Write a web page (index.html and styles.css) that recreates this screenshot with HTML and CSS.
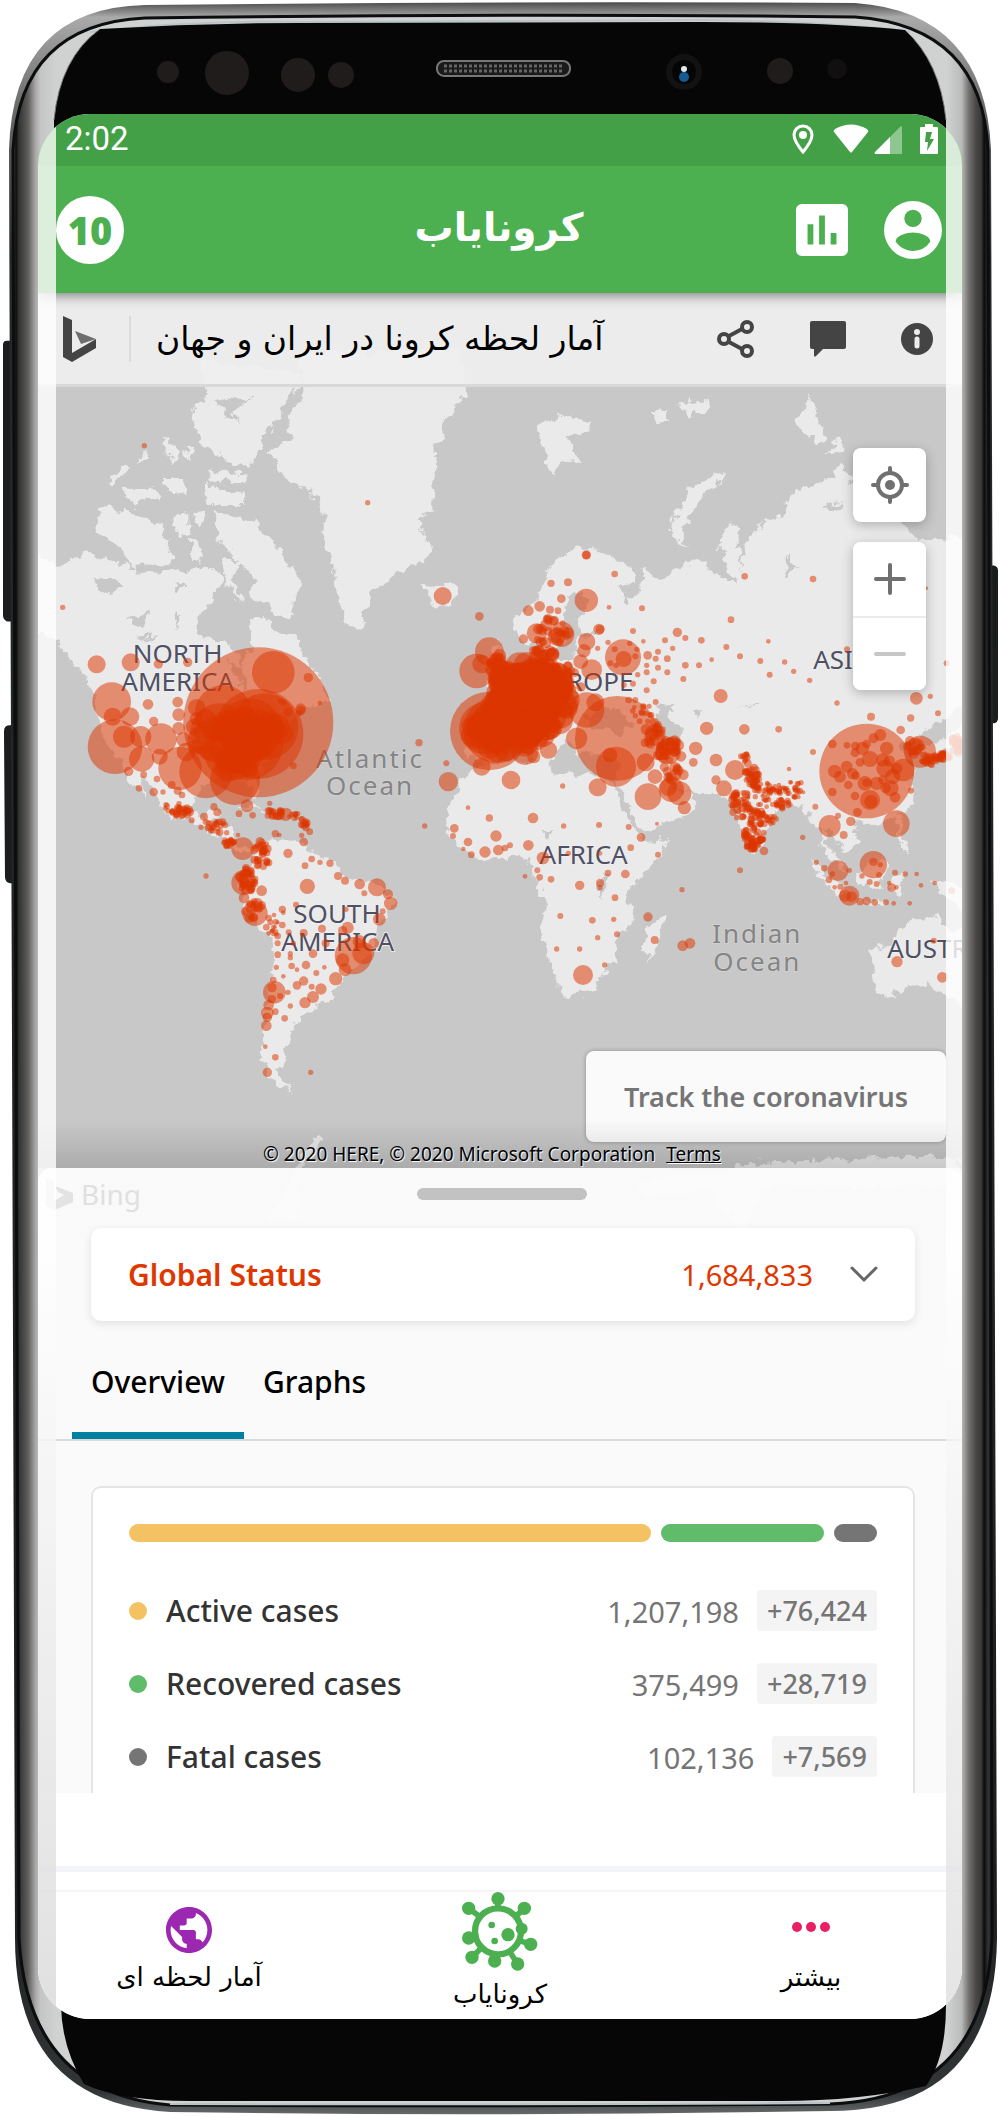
FILE: index.html
```html
<!DOCTYPE html>
<html lang="fa">
<head>
<meta charset="utf-8">
<meta name="viewport" content="width=device-width, initial-scale=1">
<title>کرونایاب</title>
<link rel="stylesheet" href="styles.css">
</head>
<body>
<div class="phone">
  <svg class="bezel" viewBox="0 0 1000 2117" preserveAspectRatio="none" aria-hidden="true">
    <defs>
      <linearGradient id="metal" x1="9" x2="996" y1="0" y2="0" gradientUnits="userSpaceOnUse">
        <stop offset="0" stop-color="#1c2022"/><stop offset=".004" stop-color="#6b6b69"/><stop offset=".007" stop-color="#0b0b0b"/>
        <stop offset=".01" stop-color="#333"/><stop offset=".019" stop-color="#5c5b5a"/><stop offset=".027" stop-color="#aaa9a8"/><stop offset=".032" stop-color="#c4c5c5"/><stop offset=".048" stop-color="#d0d2d2"/>
        <stop offset=".95" stop-color="#d0d2d2"/><stop offset=".965" stop-color="#b9bcbb"/><stop offset=".972" stop-color="#777573"/><stop offset=".979" stop-color="#4b4a48"/>
        <stop offset=".985" stop-color="#3a3937"/><stop offset=".988" stop-color="#0a0a0a"/><stop offset=".992" stop-color="#303436"/><stop offset="1" stop-color="#15191b"/>
      </linearGradient>
      <linearGradient id="rim" x1="0" x2="0" y1="0" y2="1">
        <stop offset="0" stop-color="#4c4c4c"/><stop offset=".007" stop-color="#aaa"/><stop offset=".05" stop-color="#6a6a69"/><stop offset=".12" stop-color="#26292a"/>
        <stop offset=".9" stop-color="#1d1f20"/><stop offset=".99" stop-color="#333637"/><stop offset="1" stop-color="#66696a"/>
      </linearGradient>
    </defs>
    <path d="M3 345q0-4 4-4h8v281h-8q-4-2-4-6zM4 732q0-6 6-6h8v158h-8q-5-1-5-6zM985 566h9q4 1 4 5v148q0 5-5 5h-8z" fill="#1a1c1d"/>
    <path d="M9 150Q13 8 145 5Q500 1 855 3Q985 12 991 150L997 1940Q995 2113 830 2113Q500 2119 170 2114Q15 2105 15 1940Z" fill="url(#rim)"/>
    <path d="M13 150Q20 24 145 18Q500 13 855 17Q982 26 988 150L992 1940Q985 2100 830 2106Q500 2109 170 2107Q28 2095 19 1940Z" fill="url(#metal)" stroke="#0c0d0e" stroke-width="3"/>
    <path d="M90 32Q190 20 300 22L700 20Q840 22 910 32M170 2106Q500 2107 830 2105" fill="none" stroke="#b9c4c6" stroke-width="2"/>
    <path d="M54 120Q60 58 100 29Q200 23 300 23L700 22Q830 22 905 30Q940 62 946 120V2008Q946 2060 926 2088Q860 2103 780 2103H190Q120 2103 84 2086Q62 2050 61 2008Z" fill="#060606"/>
    <path d="M54 120Q60 58 100 29M905 30Q940 62 946 120" fill="none" stroke="#77797a"/>
    <g fill="#201c1c">
      <circle cx="168" cy="72" r="11"/><circle cx="227" cy="73" r="22"/><circle cx="298" cy="75" r="17"/><circle cx="341" cy="75" r="13"/><circle cx="780" cy="71" r="13"/><circle cx="837" cy="69" r="10" fill="#120f10"/>
    </g>
    <circle cx="684" cy="72" r="18" fill="#121212"/><circle cx="684" cy="72" r="12" fill="#050505"/><circle cx="684" cy="77" r="5" fill="#165a92"/><circle cx="684" cy="69" r="3" fill="#dde8f0"/>
    <rect x="437" y="61" width="133" height="15" rx="7" fill="#1a1a1a" stroke="#777" stroke-width="2"/>
    <path d="M444 66H564M444 71H564" stroke="#666" stroke-width="3" stroke-dasharray="3 2"/>
  </svg>

  <main class="screen">
    <div class="status">
      <span>2:02</span>
      <span class="status-icons">
        <svg width="22" height="30" viewBox="0 0 22 30"><path d="M11 2a9 9 0 0 0-9 9c0 6 9 17 9 17s9-11 9-17a9 9 0 0 0-9-9z" fill="none" stroke="#fff" stroke-width="3"/><circle cx="11" cy="11" r="4" fill="#fff"/></svg>
        <svg class="wifi" width="36" height="30" viewBox="0 0 36 30"><path d="M1 8Q0 7 2 5Q18-4 34 5Q36 7 35 8L19 28Q18 29 17 28Z" fill="#fff"/></svg>
        <svg class="signal" width="28" height="30" viewBox="0 0 28 30"><path d="M16 13L27 2q1 0 1 2v26H16z" fill="#fff" opacity=".4"/><path d="M16 13V30H1Q0 29 1 28z" fill="#fff"/></svg>
        <svg width="18" height="32" viewBox="0 0 18 32"><path fill-rule="evenodd" d="M5 1h8v3h4q1 0 1 1v25q0 1-1 1H1q-1 0-1-1V5q0-1 1-1h4zM12 9H6L5 19h3L7 28l7-12h-4z" fill="#fff"/></svg>
      </span>
    </div>

    <header class="appbar">
      <span class="badge">10</span>
      <h1 dir="rtl">کرونایاب</h1>
      <span class="appbar-actions">
        <button aria-label="Statistics"><svg width="52" height="52" viewBox="3 3 18 18"><path fill="#fff" d="M19 3H5a2 2 0 0 0-2 2v14a2 2 0 0 0 2 2h14a2 2 0 0 0 2-2V5a2 2 0 0 0-2-2zM9 17H7v-7h2zm4 0h-2V7h2zm4 0h-2v-4h2z"/></svg></button>
        <button aria-label="Account"><svg width="58" height="58" viewBox="2 2 20 20"><path fill="#fff" fill-rule="evenodd" d="M12 2a10 10 0 1 0 0 20 10 10 0 0 0 0-20zm0 3a3 3 0 1 1 0 6 3 3 0 0 1 0-6zm0 14.2c-2.500 0-4.710-1.280-6-3.220.03-1.990 4-3.080 6-3.080s5.970 1.090 6 3.080a7.200 7.200 0 0 1-6 3.220z"/></svg></button>
      </span>
    </header>

    <div class="toolbar">
      <svg width="33" height="46" viewBox="0 0 33 46" aria-label="Bing"><path d="M0 0l9 4v33l24-14v9L9 46 0 41z" fill="#444"/><path d="M12 15l21 8-15 5z" fill="#6e6e6e"/></svg>
      <h2 dir="rtl">آمار لحظه کرونا در ایران و جهان</h2>
      <button aria-label="Share"><svg width="38" height="38" viewBox="0 0 38 38" fill="none" stroke="#444" stroke-width="4"><path d="M12 16L25 9M12 22l13 7"/><circle cx="7" cy="19" r="5"/><circle cx="30" cy="7" r="5"/><circle cx="30" cy="31" r="5"/></svg></button>
      <button aria-label="Feedback"><svg width="38" height="38" viewBox="0 0 38 38"><path d="M3 1h32q2 0 2 2v24q0 2-2 2H14l-7 7q-1 1-2 0v-7H3q-2 0-2-2V3q0-2 2-2z" fill="#444"/></svg></button>
      <button aria-label="Information"><svg width="32" height="32" viewBox="0 0 32 32"><circle cx="16" cy="16" r="16" fill="#444"/><circle cx="16" cy="9" r="3" fill="#ececec"/><path d="M16 16v7" stroke="#ececec" stroke-width="5" stroke-linecap="round"/></svg></button>
    </div>

    <section class="map">
      <svg class="map-canvas" viewBox="114 21 2772 2343" role="img" aria-label="World map">
        <defs>
          <filter id="coast" x="0" y="-300" width="3000" height="3000" filterUnits="userSpaceOnUse">
            <feTurbulence type="fractalNoise" baseFrequency="0.032" numOctaves="4" seed="4"/>
            <feDisplacementMap in="SourceGraphic" scale="44" xChannelSelector="R" yChannelSelector="G"/>
          </filter>
        </defs>
        <rect x="114" y="-270" width="2772" height="2850" fill="#c8c8c8"/>
        <g filter="url(#coast)">
        <g fill="#eaeaea">
          <path d="M60 500L170 555 260 520 350 545 420 575 500 580 560 570 620 560 665 590 650 640 620 680 590 720 590 770 640 782 700 800 730 870 755 800 750 720 800 710 830 760 885 770 910 830 960 900 990 960 900 985 850 1060 800 1120 780 1180 765 1260 740 1200 680 1190 620 1200 580 1260 570 1290 605 1312 640 1280 660 1290 650 1330 695 1340 700 1390 730 1412 775 1395 780 1410 730 1425 680 1395 640 1355 580 1328 500 1305 470 1245 420 1180 440 1260 380 1180 330 1110 290 1020 290 960 260 900 210 840 170 780 60 740z"/>
          <path d="M780 1385L820 1378 900 1390 960 1430 1000 1445 1040 1490 1130 1515 1185 1560 1150 1620 1125 1680 1110 1730 1040 1780 1000 1840 950 1885 900 1910 875 1945 855 2000 865 2020 830 2080 875 2132 820 2115 785 2040 790 1960 800 1850 822 1740 820 1670 770 1640 730 1570 720 1500 760 1440z"/>
          <path d="M900-80L1380-90 1398 40 1330 120 1312 200 1300 280 1318 380 1250 420 1290 500 1275 550 1190 580 1110 640 1080 745 1040 735 1015 660 1000 560 972 470 970 400 930 330 860 300 800 220 875 170 860 110 915 50z"/>
          <path d="M600-60L900-20 890 50 850 100 790 180 745 260 680 240 600 180 575 100 620 40z"/>
          <path d="M640 400L700 405 770 430 850 520 905 610 880 650 875 715 800 680 750 650 770 600 710 540 650 470zM300 380L370 390 430 420 480 440 525 545 400 565 350 490 290 460zM610 305L660 330 735 335 725 375 620 375zM630 275L745 280 735 308 620 300zM530 400L565 400 565 475 515 450zM580 400L620 395 600 450zM570 470L610 500 600 545 570 535zM320 312L370 258 385 270 330 322zM360 320L470 320 480 350 400 378zM490 300L550 300 555 345 500 335zM480 165L540 210 530 245 500 222zM410 250L440 205 440 240zM680 540L720 545 700 600 730 670 670 600zM790 620L850 640 890 710 820 680zM550 200L580 220 570 240z"/>
          <path d="M1265 615L1375 620 1360 675 1310 685z"/>
          <path d="M1605 140L1700 105 1775 130 1745 165 1700 170 1745 250 1680 235 1665 298 1638 240zM1950 95L2000 90 2010 120 1970 130zM2040 70L2130 60 2140 80 2070 110zM2150 280L2178 290 2110 350 2070 400 2050 460 2065 500 2005 470 2030 400 2070 330zM2390 130L2430 55 2460 120 2480 190 2430 180zM2475 225L2510 165 2530 215z"/>
          <path d="M1548 720L1620 640 1640 570 1700 520 1770 495 1830 530 1900 570 1910 610 1850 620 1880 665 1930 620 1935 560 1970 600 2090 540 2180 600 2210 615 2155 500 2190 425 2215 450 2220 570 2240 480 2300 420 2350 405 2360 350 2440 320 2500 290 2520 250 2555 300 2600 400 2700 420 2760 490 2840 470 2900 470 2900 980 2800 1030 2770 1055 2750 1110 2720 1080 2690 1100 2730 1140 2740 1200 2735 1280 2680 1310 2600 1335 2560 1320 2572 1380 2535 1412 2500 1370 2470 1340 2480 1400 2530 1450 2530 1475 2475 1420 2462 1340 2430 1320 2400 1270 2340 1280 2300 1340 2280 1400 2250 1412 2220 1330 2200 1280 2180 1245 2070 1232 2020 1215 1990 1180 2000 1215 2075 1240 2085 1275 2050 1305 1940 1358 1920 1350 1880 1270 1850 1200 1850 1140 1740 1115 1700 1080 1640 1160 1560 1100 1460 1150 1400 1130 1400 1020 1480 1020 1470 960 1540 910 1600 850 1620 790 1560 780z"/>
          <path d="M1450 865L1490 780 1535 900 1470 915z"/>
          <path d="M1420 1165L1480 1150 1600 1140 1650 1155 1660 1190 1700 1178 1800 1188 1840 1200 1855 1260 1900 1340 1935 1382 2002 1378 1990 1420 1900 1510 1880 1560 1902 1620 1850 1680 1845 1740 1780 1830 1690 1848 1660 1770 1620 1650 1640 1570 1600 1490 1590 1430 1540 1428 1430 1442 1360 1390 1340 1330 1345 1260z"/>
          <path d="M1992 1612L1975 1700 1945 1748 1928 1700 1940 1640zM2430 1435L2545 1540 2520 1555 2440 1462zM2530 1558L2650 1565 2640 1580zM2570 1480L2640 1430 2665 1460 2640 1522 2580 1512zM2670 1490L2720 1480 2700 1510 2710 1540 2680 1540zM2685 1305L2710 1310 2700 1360 2735 1425 2700 1400zM2790 1500L2900 1520 2900 1600 2830 1540zM2612 1720L2660 1690 2700 1650 2740 1620 2820 1600 2830 1640 2900 1660 2900 1890 2830 1840 2790 1810 2720 1830 2630 1850 2625 1800zM700 1285L760 1275 790 1290 740 1290zM790 1300L860 1295 850 1310zM2760 1100L2830 1080 2900 1020 2900 1080 2800 1130z"/>
          <path d="M880 2360L950 2270 970 2280 900 2380 900 2520 800 2520 860 2440zM2150 2380L2240 2350 2500 2340 2720 2330 2860 2330 2900 2370 2900 2420 2300 2420zM1900 2420L2000 2380 2300 2390 2230 2560 2120 2430 1950 2450z"/>
        </g>
        <g fill="#c8c8c8">
          <path d="M1690 720L1705 650 1740 630 1775 670 1730 720 1745 760 1820 745 1740 780 1710 840 1655 840 1690 790zM1970 980L2020 975 2005 1010 2045 1060 2030 1120 1990 1100zM2080 980L2105 990 2090 1015zM1750 1010L1840 985 1905 1030 1860 1060 1780 1050zM2360 520L2400 560 2350 590zM2470 380L2530 370 2500 400zM2560 410L2600 380 2600 420zM1630 1350L1660 1350 1640 1370zM1800 1490L1830 1490 1800 1560zM2220 990L2280 970 2270 980z"/>
          <path d="M280 590L370 610 340 650 300 630zM380 720L450 690 420 740zM520 600L560 620 530 640zM410 770L480 765 430 785zM520 690L550 700 530 750zM640 640L700 630 720 680 670 670zM680 840L730 870 740 930 700 880z"/>
          <path d="M640 60L760 50 700 90 720 130 670 100zM880 20L890 60 800 170 790 200zM1300 300L1330 320 1320 430 1240 430 1300 400z"/>
        </g>
        </g>
        <g class="land-label" text-anchor="middle">
          <text x="533" y="848">NORTH</text><text x="533" y="933">AMERICA</text>
          <text x="1011" y="1628">SOUTH</text><text x="1013" y="1713">AMERICA</text>
          <text x="1751" y="1453">AFRICA</text><text x="1750" y="933">EUROPE</text>
          <text x="2524" y="866">ASIA</text><text x="2866" y="1733">AUSTRALIA</text>
        </g>
        <g class="sea-label" text-anchor="middle">
          <text x="1110" y="1163">Atlantic</text><text x="1110" y="1245">Ocean</text>
          <text x="2272" y="1690">Indian</text><text x="2272" y="1773">Ocean</text>
        </g>
        <g id="cases" fill="#dd3500" fill-opacity=".52"></g>
      </svg>
      <div class="map-controls">
        <button class="map-button" aria-label="Locate me"><svg width="38" height="38" viewBox="0 0 38 38" fill="none" stroke="#707070" stroke-width="4" stroke-linecap="round"><circle cx="19" cy="19" r="12"/><path d="M19 2v5M19 31v5M2 19h5M31 19h5"/><circle cx="19" cy="19" r="5" fill="#707070" stroke="none"/></svg></button>
        <div class="zoom">
          <button class="map-button" aria-label="Zoom in"><svg width="34" height="34" viewBox="0 0 34 34" stroke="#707070" stroke-width="4" stroke-linecap="round"><path d="M17 3v28M3 17h28"/></svg></button>
          <button class="map-button" aria-label="Zoom out"><svg width="34" height="34" viewBox="0 0 34 34" stroke="#c6c6c6" stroke-width="4" stroke-linecap="round"><path d="M3 17h28"/></svg></button>
        </div>
      </div>
      <button class="track">Track the coronavirus</button>
      <p class="credits">© 2020 HERE, © 2020 Microsoft Corporation <a href="#">Terms</a></p>
    </section>

    <section class="sheet">
      <div class="sheet-top">
        <span class="watermark"><svg width="27" height="32" viewBox="0 0 27 32"><path d="M0 0l8 3v20l10-6-6-3-3-6 18 7v9L9 32 0 28z" fill="#e3e3e3"/></svg>Bing</span>
        <span class="handle"></span>
      </div>
      <button class="global"><strong>Global Status</strong><span>1,684,833</span><svg width="28" height="17" viewBox="0 0 28 17"><path d="M2 2l12 12L26 2" fill="none" stroke="#666" stroke-width="3" stroke-linecap="round"/></svg></button>
      <nav class="tabs"><a class="active" href="#">Overview</a><a href="#">Graphs</a></nav>
      <div class="panel">
        <div class="bars"><i class="active-bg" style="flex-grow:524"></i><i class="recovered-bg" style="flex-grow:164"></i><i class="fatal-bg" style="flex-grow:43"></i></div>
        <table>
          <tr><th scope="row"><i class="active-bg"></i>Active cases</th><td>1,207,198<b>+76,424</b></td></tr>
          <tr><th scope="row"><i class="recovered-bg"></i>Recovered cases</th><td>375,499<b>+28,719</b></td></tr>
          <tr><th scope="row"><i class="fatal-bg"></i>Fatal cases</th><td>102,136<b>+7,569</b></td></tr>
        </table>
      </div>
    </section>

    <div class="spacer"></div>
    <nav class="bottom-nav">
      <a href="#"><svg width="46" height="46" viewBox="2 2 20 20"><path fill="#9c27b0" d="M12 2C6.480 2 2 6.480 2 12s4.480 10 10 10 10-4.480 10-10S17.520 2 12 2zm-1 17.930c-3.950-.49-7-3.850-7-7.930 0-.62.080-1.210.21-1.790L9 15v1c0 1.100.9 2 2 2v1.930zm6.900-2.540c-.26-.81-1-1.390-1.900-1.390h-1v-3c0-.55-.45-1-1-1H8v-2h2c.55 0 1-.45 1-1V7h2c1.100 0 2-.9 2-2v-.41c2.930 1.190 5 4.060 5 7.410 0 2.080-.8 3.970-2.100 5.390z"/></svg><span dir="rtl">آمار لحظه ای</span></a>
      <a class="virus" href="#"><svg width="76" height="80" viewBox="0 0 228 240"><g fill="#4caf50"><circle cx="108" cy="20" r="20"/><circle cx="20" cy="49" r="20"/><circle cx="187" cy="49" r="20"/><circle cx="20" cy="138" r="20"/><circle cx="206" cy="157" r="20"/><circle cx="30" cy="196" r="20"/><circle cx="98" cy="207" r="20"/><circle cx="167" cy="216" r="20"/><circle cx="179" cy="110" r="18"/><circle cx="89" cy="99" r="10"/><circle cx="138" cy="128" r="20"/><circle cx="98" cy="147" r="10"/></g><circle cx="108" cy="118" r="69" fill="none" stroke="#4caf50" stroke-width="19"/><path d="M108 20v32M20 49l38 28M187 49l-30 28M20 138l30-4M206 157l-42-14M30 196l36-36M98 207v-20M167 216l-22-34" stroke="#4caf50" stroke-width="17"/></svg><span dir="rtl">کرونایاب</span></a>
      <a href="#"><svg width="46" height="46" viewBox="0 0 46 46" fill="#e91e63"><circle cx="9" cy="20" r="5"/><circle cx="23" cy="20" r="5"/><circle cx="37" cy="20" r="5"/></svg><span dir="rtl">بیشتر</span></a>
    </nav>
    <div class="glass"></div>
  </main>
</div>
<script src="map.js"></script>
</body>
</html>
```

FILE: styles.css
```css
* { box-sizing: border-box; }
body { margin: 0; background: #fff; font-family: "Noto Sans", "Open Sans", sans-serif; }
button { border: 0; padding: 0; background: none; font: inherit; color: inherit; display: flex; align-items: center; justify-content: center; }
a { color: inherit; text-decoration: none; }
svg { display: block; flex: none; }
h1, h2, p { margin: 0; }

.phone { position: relative; padding: 114px 38px 96px; }
.bezel { position: absolute; inset: 0; width: 100%; height: 100%; }

.screen { position: relative; overflow: hidden; border-radius: 52px; background: #fafafa; }
.glass { position: absolute; inset: 0; z-index: 5; pointer-events: none; background: linear-gradient(rgba(255, 255, 255, .8) 60%, rgba(216, 216, 216, .8)) left / 18px 100% no-repeat, linear-gradient(rgba(255, 255, 255, .8) 60%, rgba(222, 222, 222, .8)) right / 16px 100% no-repeat; }

.status { position: relative; z-index: 4; display: flex; justify-content: space-between; height: 52px; padding: 3px 24px 0 27px; background: #43a047; color: #fff; font: 400 33px/44px Roboto, sans-serif; }
.status-icons { display: flex; align-items: center; padding-bottom: 6px; }
.wifi { margin-left: 19px; }
.signal { margin: 0 18px 0 5px; }

.appbar { position: relative; z-index: 3; display: grid; grid-template-columns: 1fr auto 1fr; align-items: center; height: 127px; padding: 0 20px 0 18px; background: #4caf50; color: #fff; box-shadow: 0 2px 12px rgba(0, 0, 0, .5); }
.badge { width: 68px; height: 68px; border-radius: 50%; background: #fff; color: #4caf50; font: 800 38px/68px "Open Sans", sans-serif; text-align: center; }
.appbar h1 { padding-bottom: 4px; font: 700 39px/52px "DejaVu Sans", sans-serif; }
.appbar-actions { display: flex; justify-content: flex-end; align-items: center; gap: 36px; }

.toolbar { position: relative; z-index: 2; display: flex; align-items: center; height: 94px; padding: 0 29px 0 25px; background: rgba(240, 240, 240, .9); border-bottom: 3px solid #d8d8d8; }
.toolbar h2 { margin: 0 auto 0 33px; padding-left: 25px; border-left: 2px solid #dcdcdc; font: 400 33px/46px "DejaVu Sans", sans-serif; color: #000; }
.toolbar button { margin-left: 54px; }

.map { position: relative; }
.map-canvas { width: 100%; height: auto; overflow: visible; }
.land-label, .sea-label { font-size: 78px; font-family: "Noto Sans", sans-serif; paint-order: stroke; stroke-width: 5px; }
.land-label { fill: #4f5064; stroke: #efefef; }
.sea-label { fill: #858585; stroke: #d2d2d2; letter-spacing: 6px; }
.map-controls { position: absolute; top: 61px; right: 36px; display: grid; gap: 20px; }
.map-button { width: 73px; height: 74px; border-radius: 8px; background: #fff; }
.map-controls > * { border-radius: 8px; background: #fff; box-shadow: 0 3px 12px rgba(0, 0, 0, .25); }
.zoom .map-button + .map-button { border-top: 2px solid #ebebeb; border-radius: 0 0 8px 8px; }
.track { position: absolute; right: 16px; bottom: 26px; width: 360px; height: 91px; border-radius: 8px; background: #fafafa; box-shadow: 0 0 4px rgba(0, 0, 0, .3); color: #757575; font-size: 27px; font-weight: 600; }
.credits { position: absolute; inset: auto 0 0; padding: 20px 16px 0 0; background: linear-gradient(transparent, rgba(0, 0, 0, .14)); color: #000; font-size: 19px; line-height: 28px; text-align: center; text-shadow: 1px 1px 1px #fff; white-space: nowrap; }
.credits a { margin-left: 6px; text-decoration: underline; }

.sheet { position: relative; z-index: 1; padding: 0 47px 0 53px; border-radius: 14px 14px 0 0; background: linear-gradient(rgba(252, 252, 252, .95) 66px, #fafafa 66px); }
.sheet-top { display: grid; grid-template-columns: 1fr auto 1fr; height: 60px; padding-top: 10px; margin-left: -49px; margin-right: -47px; }
.watermark { display: flex; align-items: center; align-self: start; gap: 8px; padding-left: 4px; height: 32px; color: #e0e0e0; font-size: 28px; }
.handle { width: 170px; height: 12px; margin-top: 10px; border-radius: 6px; background: #c2c2c2; }
.global { width: 100%; height: 93px; padding: 0 37px; border-radius: 10px; background: #fff; box-shadow: 0 3px 10px rgba(0, 0, 0, .1); color: #de3700; font-size: 29px; }
.global strong { margin-right: auto; font-weight: 600; font-size: 30px; }
.global svg { margin-left: 37px; }
.tabs { display: flex; margin: 0 -47px 45px -53px; padding-left: 34px; border-bottom: 2px solid #d9d9d9; font-size: 30px; font-weight: 500; color: #000; }
.tabs a { height: 118px; padding: 41px 19px 0; line-height: 40px; border-bottom: 7px solid transparent; }
.tabs .active { border-color: #0080a0; }

.panel { padding: 36px 36px 0; border: solid #e5e5e5; border-width: 2px 2px 0; border-radius: 10px 10px 0 0; background: #fff; }
.bars { display: flex; gap: 10px; }
.bars i { flex: 1 1 0; height: 18px; border-radius: 9px; }
.active-bg { background: #f4c262; }
.recovered-bg { background: #60bc6a; }
.fatal-bg { background: #757575; }
table { width: 100%; margin: 32px 0 -3px; border-collapse: collapse; }
tr { height: 73px; }
th, td { padding: 0; white-space: nowrap; }
th { text-align: left; color: #333; font-size: 30px; font-weight: 500; }
th i { display: inline-block; width: 18px; height: 18px; margin-right: 19px; border-radius: 50%; vertical-align: 2px; }
td { text-align: right; color: #757575; font-size: 29px; }
td b { display: inline-block; margin-left: 18px; padding: 0 10px; border-radius: 4px; background: #f4f4f4; font-size: 27px; font-weight: 500; line-height: 41px; vertical-align: 2px; }

.spacer { height: 102px; background: linear-gradient(#f4f4f4 2px, #fff 2px 76px, #f3f3fa 76px 82px, #fff 82px 100px, #f5f5f7 100px); }
.bottom-nav { display: grid; grid-template-columns: 302px 1fr 302px; height: 127px; background: #fff; }
.bottom-nav a { display: flex; flex-direction: column; align-items: center; padding-top: 15px; color: #000; font: 400 26px/36px "DejaVu Sans", sans-serif; }
.bottom-nav span { margin-top: 6px; }
.bottom-nav .virus { padding-top: 0; }
.bottom-nav .virus span { margin-top: 4px; }
```

FILE: map.js
```js
// Case markers: x, y, radius in map units.
const markers = `
775 1027 225,775 1062 135,795 1040 100,820 877 64,925 893 14,902 986 16,960 969 7,880 1157 10,670 1000 85,700 1110 90,660 1060 90,740 1090 110,750 1050 95,
345 1100 82,335 965 58,290 853 27,392 847 27,475 852 14,563 847 14,338 1010 27,390 1010 28,372 1070 33,422 1070 32,425 1137 38,483 1077 47,479 1130 24,540 1165 65,618 1175 80,705 1200 75,
444 973 16,533 966 16,536 1004 19,461 1024 14,536 1045 19,590 983 26,550 1078 22,605 1080 42,558 1116 28,386 1174 14,431 1184 10,471 1197 10,417 1225 10,461 1236 13,489 1236 8,515 1215 12,533 1232 12,546 1245 10,188 682 8,433 197 8,1103 368 8,
741 1277 19,717 1301 10,758 1306 10,809 1270 8,857 1303 20,642 1280 11,652 1297 12,612 1310 12,575 1321 9,714 1365 7,680 1358 8,676 1335 9,728 1406 34,911 1386 13,929 1355 10,905 1366 8,826 1361 11,838 1365 7,618 1488 8,
864 1420 14,935 1437 10,915 1457 10,960 1447 8,990 1450 11,1014 1488 12,1035 1502 12,1079 1512 16,1131 1522 27,1093 1540 9,1164 1543 15,1172 1570 20,1138 1618 19,1148 1594 9,922 1519 23,785 1532 16,732 1508 38,765 1600 38,732 1553 16,
888 1574 9,847 1588 11,822 1605 7,850 1598 7,1038 1588 8,1043 1643 18,1028 1652 14,966 1646 12,911 1659 12,1060 1727 56,1090 1720 33,1121 1690 16,1078 1685 20,1028 1740 20,1035 1769 19,1007 1796 20,977 1690 12,939 1721 13,
833 1668 10,833 1690 9,866 1657 9,880 1690 8,847 1635 10,799 1642 10,806 1614 10,833 1724 10,871 1721 8,871 1733 8,829 1762 8,875 1758 10,918 1755 13,891 1769 7,949 1779 9,973 1762 7,850 1789 7,911 1803 14,891 1816 13,935 1820 9,963 1827 17,939 1851 18,915 1868 17,
823 1837 34,816 1823 14,840 1848 9,864 1837 8,816 1857 12,806 1875 16,802 1899 19,802 1912 14,826 1895 10,799 1937 16,871 1878 8,854 1915 10,796 2000 7,826 2032 10,802 2077 14,932 2077 8,820 1800 10,
1328 648 27,1438 709 13,1257 1088 11,1339 1150 9,1345 1205 29,1468 815 43,1430 873 52,1445 852 28,1468 1053 118,1445 1160 27,1455 1045 78,1490 1050 100,
1404 1283 7,1274 1338 8,1468 1314 11,1363 1345 13,1359 1368 9,1404 1386 13,1390 1407 7,1414 1424 10,1455 1416 17,1488 1368 17,1495 1410 16,1533 1200 28,1688 1218 8,1530 1396 9,1515 1404 10,1585 1396 16,1599 1314 16,
1691 1338 8,1797 1335 9,1886 1341 9,1971 1331 6,1923 1372 13,1892 1403 10,1974 1424 9,1629 1434 19,1705 1420 8,1800 1420 7,1612 1471 9,1575 1489 7,1619 1492 10,1653 1498 10,1739 1516 14,1800 1509 12,1800 1523 8,1824 1479 10,1876 1482 13,1845 1553 10,
1681 1608 9,1777 1621 10,1841 1618 8,1851 1663 9,1793 1673 8,1670 1707 8,1739 1707 8,1749 1785 30,1814 1755 8,1944 1611 14,1964 1680 12,2048 1697 16,2070 1690 16,2046 1529 8,2220 1471 9,2408 1372 8,
1759 525 14,1759 525 12,1844 582 10,1653 610 11,1704 607 12,1684 656 13,1759 661 35,1585 692 16,1619 679 16,1650 689 12,1674 692 10,1827 682 7,1926 685 9,1663 722 14,1610 760 30,1685 763 38,1670 770 27,1570 777 14,1797 748 17,1800 748 13,1760 785 26,1752 812 20,1793 805 8,1824 787 8,1742 845 22,1775 869 31,
1869 832 54,1871 837 24,1899 753 9,1930 784 7,1844 808 9,1889 790 8,1911 808 8,1943 826 13,1906 829 9,1974 815 9,1967 836 9,2002 836 10,2018 805 8,1995 781 9,2032 757 14,2056 774 9,2104 781 10,2179 801 9,2193 719 10,2234 589 10,2439 597 10,2305 784 7,
2135 839 7,2220 829 9,2281 843 9,2354 846 8,2381 874 8,2309 884 9,2429 901 8,2097 856 9,2056 856 10,2050 897 9,2002 877 9,1974 863 9,1940 856 8,1940 877 9,1913 884 8,1961 904 9,1899 911 9,1940 931 9,1831 850 9,1848 856 8,1872 915 8,1967 966 9,1947 979 8,1926 999 10,
2162 948 21,2120 1045 20,2233 1048 16,2336 1048 10,2511 969 8,2541 808 9,2749 955 19,2791 949 8,2613 1010 12,2732 1014 11,2814 1000 9,2702 1050 13,2439 1116 9,2367 1167 7,2840 850 9,
1760 990 53,1786 967 27,1730 1075 32,1852 1075 127,1848 1160 60,1830 1125 22,1793 1222 27,1886 960 10,1906 960 9,1458 1050 60,1965 1065 32,1585 1105 19,1601 1130 20,1645 1110 26,2005 1115 38,1937 1147 27,1965 1190 22,2014 1228 38,2038 1240 36,1944 1250 40,2053 1283 20,2005 1222 26,
2587 1105 20,2648 1140 20,2566 1098 13,2580 1147 13,2567 1187 13,2600 1208 13,2540 1160 18,2520 1190 18,2648 1200 14,2672 1225 24,2710 1170 34,2205 1170 30,2087 1105 20,2080 1147 13,2148 1140 19,2148 1200 14,2172 1225 24,
2600 1173 142,2497 1092 13,2541 1096 10,2565 1118 13,2600 1092 13,2621 1075 15,2641 1065 18,2660 1105 20,2610 1137 24,2668 1143 17,2690 1165 17,2655 1165 26,2678 1190 23,2504 1174 20,2558 1181 17,2595 1210 22,2630 1210 20,2657 1224 16,2545 1215 13,2497 1236 13,2565 1248 13,2610 1260 30,2613 1265 20,2685 1252 16,2733 1232 9,2572 1297 13,
2760 1115 48,2748 1098 25,2785 1135 17,2489 1338 33,2689 1331 40,2514 1307 9,2552 1324 14,2531 1365 12,2446 1280 9,2292 1413 13,
2514 1472 31,2620 1454 41,2620 1446 12,2641 1454 8,2548 1471 8,2473 1465 10,2449 1447 8,2497 1482 8,2487 1499 10,2504 1522 7,2521 1520 9,2538 1509 7,2586 1488 8,2609 1506 9,2630 1512 9,2637 1485 9,2685 1478 9,2716 1482 8,2750 1482 7,2763 1516 7,2804 1509 7,2668 1509 7,2675 1523 13,2689 1522 7,2548 1547 30,2535 1547 18,2555 1550 16,2580 1565 11,2600 1563 13,2624 1567 10,2658 1567 9,2681 1570 7,2729 1570 7,2855 1532 10,2801 1682 9,2691 1745 17,2827 1792 16,2778 625 6`;

// Dense regions: centre x, centre y, spread x, spread y, count, min radius, max radius.
const clusters = [
  [760, 1060, 95, 50, 26, 22, 48], [700, 1150, 55, 35, 9, 22, 40], [620, 1060, 50, 60, 8, 20, 36], [860, 985, 50, 25, 5, 8, 16], [1590, 960, 115, 105, 170, 18, 48],
  [1465, 1050, 60, 50, 30, 20, 38], [1540, 1060, 90, 60, 40, 22, 44], [1490, 870, 22, 50, 28, 12, 20],
  [1620, 835, 50, 30, 24, 12, 22], [1655, 755, 50, 45, 22, 9, 18], [1690, 900, 60, 60, 26, 9, 15],
  [2010, 1115, 40, 36, 30, 9, 20], [1955, 1060, 36, 40, 16, 8, 18], [1920, 1000, 40, 25, 10, 7, 10],
  [2020, 1170, 36, 30, 12, 9, 18], [545, 1295, 25, 18, 22, 7, 13], [510, 1280, 35, 25, 10, 7, 9],
  [640, 1340, 40, 20, 22, 7, 11], [686, 1388, 18, 12, 18, 7, 10], [825, 1300, 28, 12, 18, 8, 12],
  [880, 1308, 22, 9, 8, 7, 9], [910, 1335, 12, 24, 12, 7, 11], [785, 1425, 26, 42, 34, 7, 13],
  [742, 1500, 24, 38, 40, 7, 14], [765, 1595, 30, 34, 18, 7, 15], [825, 1650, 20, 40, 12, 6, 9],
  [2255, 1190, 22, 30, 36, 7, 12], [2235, 1135, 16, 20, 9, 8, 12], [2310, 1225, 60, 16, 36, 6, 9],
  [2220, 1275, 34, 40, 34, 7, 13], [2270, 1315, 28, 28, 34, 7, 11], [2260, 1370, 34, 28, 45, 7, 12],
  [2258, 1400, 18, 12, 20, 8, 11], [2285, 1255, 60, 45, 30, 6, 9], [2350, 1270, 26, 16, 18, 7, 10],
  [2390, 1225, 35, 30, 22, 6, 9], [2310, 1320, 20, 14, 12, 6, 10], [2745, 1100, 24, 22, 10, 9, 15],
  [2785, 1140, 25, 18, 18, 7, 11], [2830, 1130, 26, 14, 30, 7, 11], [2870, 1095, 16, 30, 26, 8, 14]
];

let seed = 7;
const random = () => (seed = (seed * 16807) % 2147483647) / 2147483647;
const layer = document.getElementById("cases");

function addMarker(x, y, r) {
  const circle = document.createElementNS("http://www.w3.org/2000/svg", "circle");
  circle.setAttribute("cx", Math.round(x));
  circle.setAttribute("cy", Math.round(y));
  circle.setAttribute("r", Math.round(r));
  layer.append(circle);
}

markers.split(",").forEach(m => addMarker(...m.trim().split(" ").map(Number)));
clusters.forEach(([x, y, sx, sy, count, min, max]) => {
  for (let i = 0; i < count; i++) {
    const angle = random() * Math.PI * 2;
    const distance = Math.sqrt(random());
    addMarker(x + Math.cos(angle) * distance * sx, y + Math.sin(angle) * distance * sy, min + random() * (max - min));
  }
});
```
